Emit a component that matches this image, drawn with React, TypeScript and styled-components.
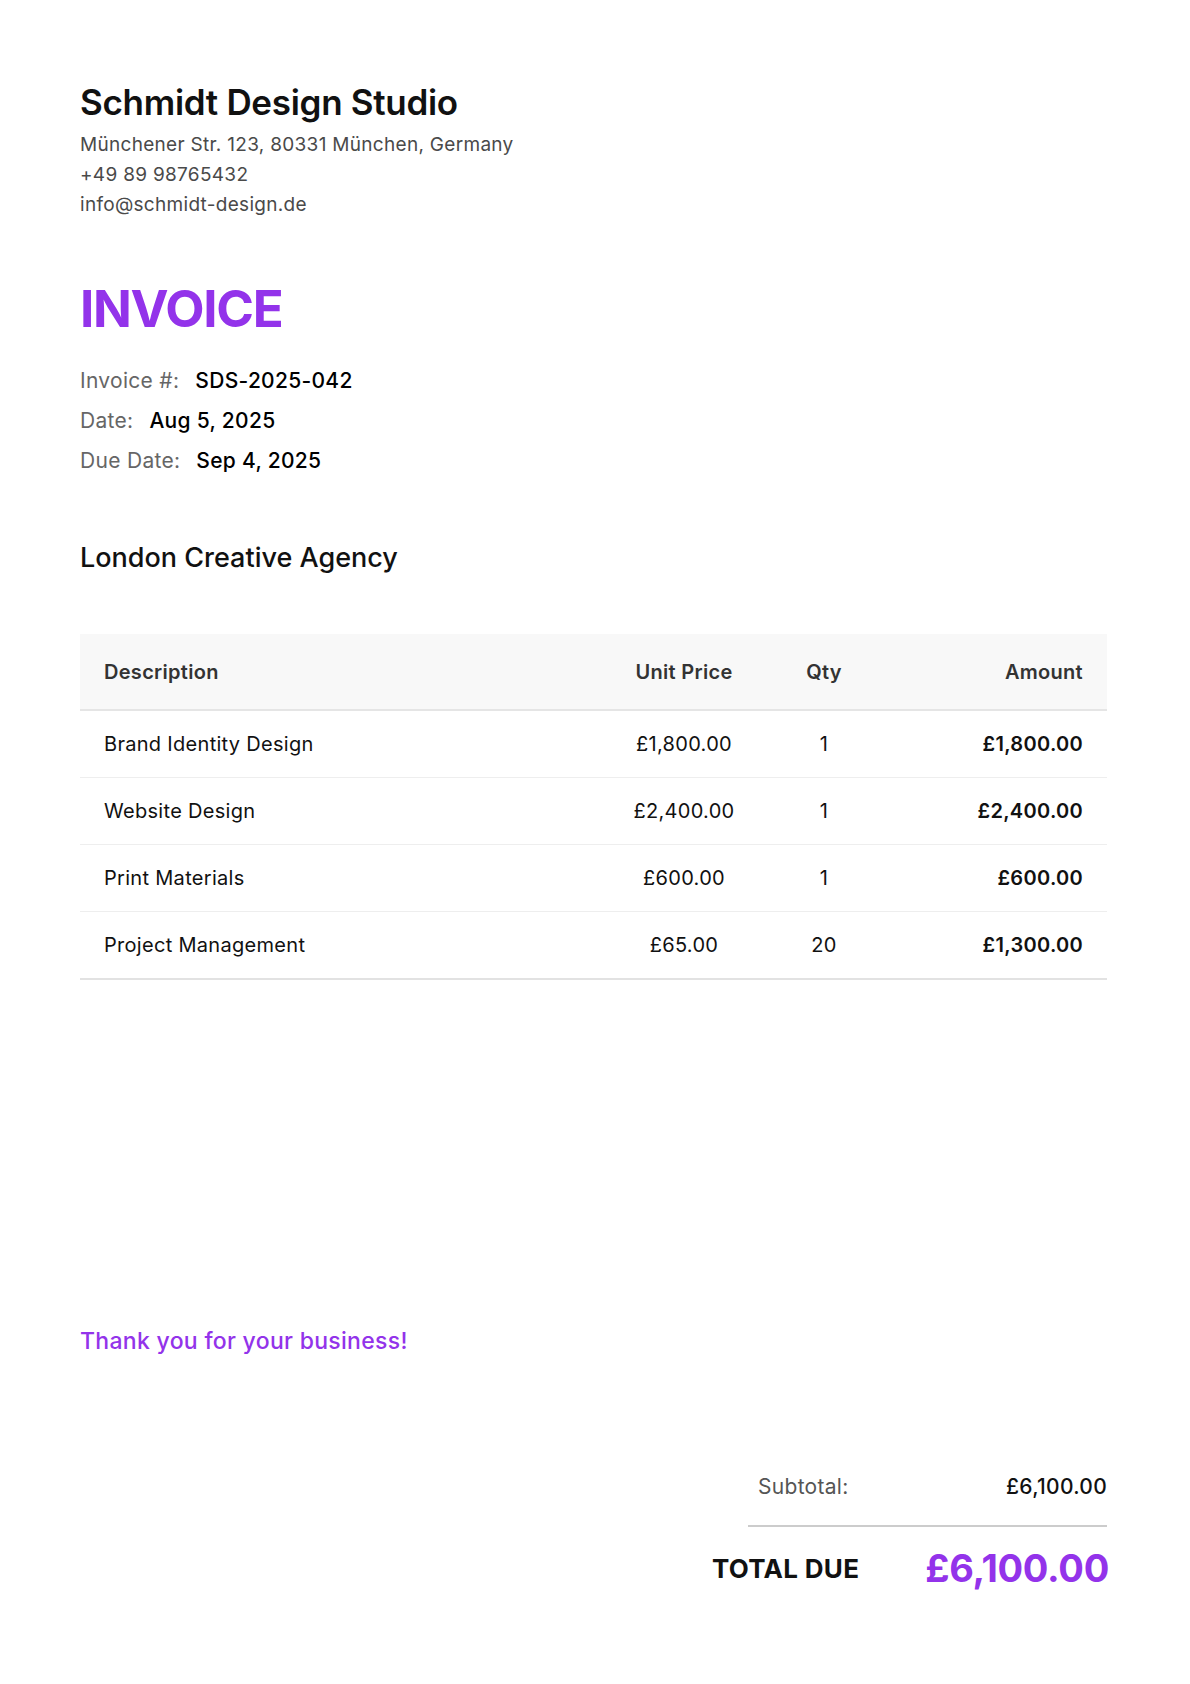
import React from "react";
import styled, { createGlobalStyle } from "styled-components";

const Global = createGlobalStyle`
  body { margin: 0; background: #fff; font-family: Inter, "Noto Sans", sans-serif; color: #111; letter-spacing: 0.3px; }
`;
const purple = "#9333ea";

const Page = styled.div`
  width: 1190px; min-height: 1684px; box-sizing: border-box;
  padding: 78px 83px 80px 80px; display: flex; flex-direction: column;
`;
const Company = styled.h1`
  margin: 0; font-size: 35px; font-weight: 600; letter-spacing: -0.3px; line-height: 48px;
`;
const Info = styled.div`
  margin-top: 4px; font-size: 19px; line-height: 30px; color: #4a4a4a;
`;
const Title = styled.h2`
  margin: 58px 0 0; font-size: 51px; font-weight: 700; color: ${purple}; letter-spacing: -1.3px; line-height: 62px;
`;
const Meta = styled.div`
  margin-top: 26px; display: flex; flex-direction: column; gap: 10px;
`;
const MetaRow = styled.div`
  font-size: 21px; line-height: 30px; display: flex; gap: 16px;
`;
const Label = styled.span` color: #666; `;
const Value = styled.span` font-weight: 500; color: #000; `;
const Client = styled.div`
  margin-top: 64px; font-size: 27px; font-weight: 500; line-height: 36px; letter-spacing: 0;
`;
const Table = styled.table`
  margin-top: 58px; width: 100%; border-collapse: collapse; font-size: 20px; table-layout: fixed;
`;
const Th = styled.th<{ $align: string; $w?: string }>`
  background: #f8f8f8; height: 76px; padding: 0 24px; text-align: ${p => p.$align};
  font-weight: 600; color: #333; border-bottom: 2px solid #e5e5e5; width: ${p => p.$w || "auto"};
  box-sizing: border-box;
`;
const Td = styled.td<{ $align: string; $bold?: boolean }>`
  height: 66px; padding: 0 24px; text-align: ${p => p.$align}; color: #111;
  font-weight: ${p => (p.$bold ? 600 : 400)}; border-bottom: 1px solid #eee;
`;
const Tr = styled.tr`
  &:last-child td { border-bottom: 2px solid #e2e2e2; }
`;
const Thanks = styled.div`
  margin-top: 346px; color: ${purple}; font-size: 23px; font-weight: 500; line-height: 30px;
`;
const Totals = styled.div`
  align-self: flex-end; width: 359px; margin-top: 116px; display: flex; flex-direction: column;
`;
const SubRow = styled.div`
  display: flex; justify-content: space-between; font-size: 21px; line-height: 30px;
  padding: 0 0 23px 10px; border-bottom: 2px solid #ccc;
`;
const SubLabel = styled.span` color: #555; `;
const SubVal = styled.span` font-weight: 500; `;
const TotalRow = styled.div`
  display: flex; justify-content: flex-end; align-items: center; gap: 66px; margin-top: 18px; margin-right: -2px;
  white-space: nowrap;
`;
const TotalLabel = styled.span` font-size: 26px; font-weight: 700; `;
const TotalVal = styled.span` font-size: 38px; font-weight: 700; color: ${purple}; letter-spacing: -0.3px; `;

const items = [
  ["Brand Identity Design", "£1,800.00", "1", "£1,800.00"],
  ["Website Design", "£2,400.00", "1", "£2,400.00"],
  ["Print Materials", "£600.00", "1", "£600.00"],
  ["Project Management", "£65.00", "20", "£1,300.00"],
];

export default function App() {
  return (
    <Page>
      <Global />
      <Company>Schmidt Design Studio</Company>
      <Info>
        <div>Münchener Str. 123, 80331 München, Germany</div>
        <div>+49 89 98765432</div>
        <div>info@schmidt-design.de</div>
      </Info>
      <Title>INVOICE</Title>
      <Meta>
        <MetaRow><Label>Invoice #:</Label><Value>SDS-2025-042</Value></MetaRow>
        <MetaRow><Label>Date:</Label><Value>Aug 5, 2025</Value></MetaRow>
        <MetaRow><Label>Due Date:</Label><Value>Sep 4, 2025</Value></MetaRow>
      </Meta>
      <Client>London Creative Agency</Client>
      <Table>
        <thead>
          <tr>
            <Th $align="left">Description</Th>
            <Th $align="center" $w="180px">Unit Price</Th>
            <Th $align="center" $w="100px">Qty</Th>
            <Th $align="right" $w="233px">Amount</Th>
          </tr>
        </thead>
        <tbody>
          {items.map(r => (
            <Tr key={r[0]}>
              <Td $align="left">{r[0]}</Td>
              <Td $align="center">{r[1]}</Td>
              <Td $align="center">{r[2]}</Td>
              <Td $align="right" $bold>{r[3]}</Td>
            </Tr>
          ))}
        </tbody>
      </Table>
      <Thanks>Thank you for your business!</Thanks>
      <Totals>
        <SubRow><SubLabel>Subtotal:</SubLabel><SubVal>£6,100.00</SubVal></SubRow>
        <TotalRow><TotalLabel>TOTAL DUE</TotalLabel><TotalVal>£6,100.00</TotalVal></TotalRow>
      </Totals>
    </Page>
  );
}
